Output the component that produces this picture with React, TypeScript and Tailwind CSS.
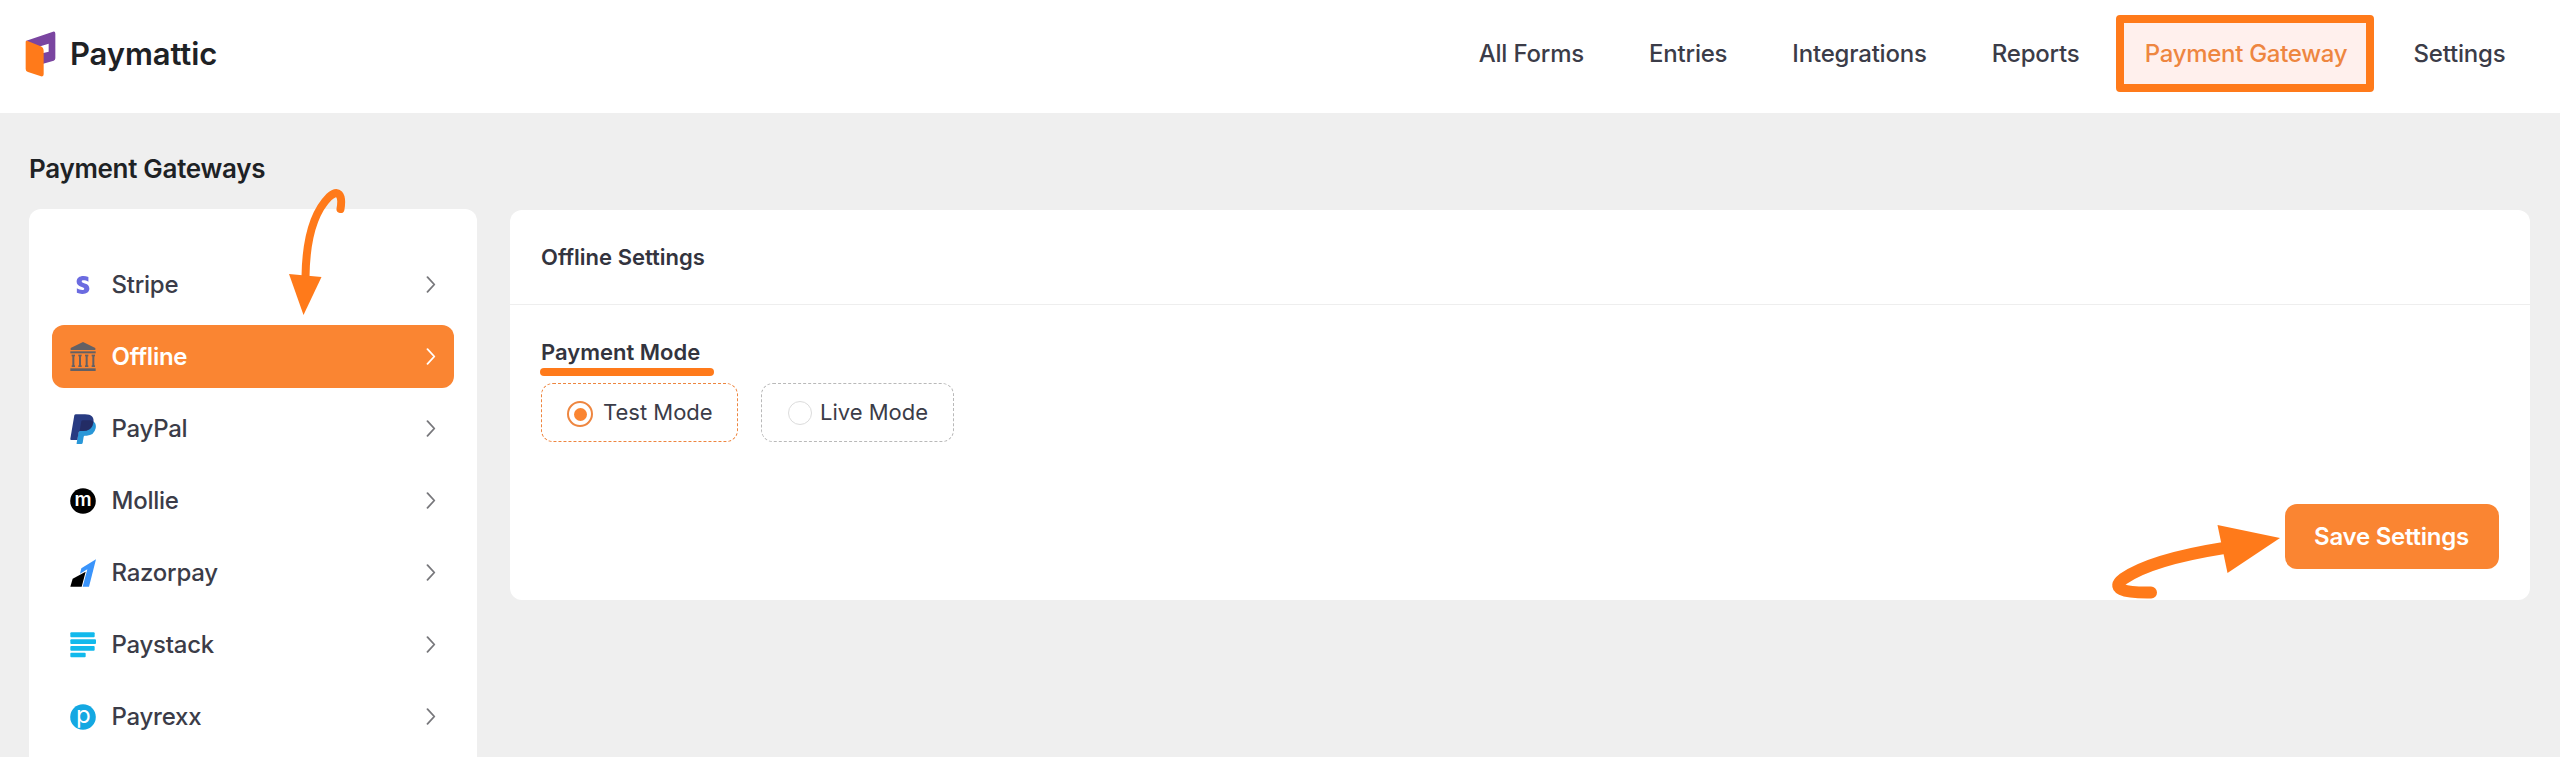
import React from 'react';
import { FaStripeS } from 'react-icons/fa';

const BrandLogo = () => (
  <svg width="31" height="47" viewBox="0 0 93 141">
    <path
      fill="#7a45a0"
      fillRule="evenodd"
      d="M4 29 L84 2 Q91 0 91 8 V82 Q91 87 86 89 L52 99 V67 L71 62 V38 L36 49 Q12 37 4 29 Z"
    />
    <path fill="#ff7a1a" d="M2 33 Q2 28 8 30 L47 46 Q56 50 56 60 V130 Q56 138 48 136 L9 123 Q2 121 2 114 Z" />
  </svg>
);

const StripeIcon = () => <FaStripeS className="h-[18px] w-[14px] text-[#6b6be0]" />;

const BankIcon = () => (
  <svg width="26" height="30" viewBox="0 0 78 90" fill="#636064">
    <path d="M39 0 L76 18 V24 H2 V18 Z" />
    <rect x="1" y="28" width="76" height="6" />
    {[6, 26, 46, 66].map((x) => (
      <g key={x}>
        <rect x={x - 1} y="38" width="10" height="5" />
        <rect x={x + 1} y="41" width="6" height="32" />
        <rect x={x - 1} y="70" width="10" height="5" />
      </g>
    ))}
    <rect x="1" y="79" width="76" height="8" />
  </svg>
);

const PaypalIcon = () => (
  <svg width="26" height="30" viewBox="0 0 78 90">
    <path fill="#2997d8" d="M69 22 Q80 28 77 43 Q72 65 50 65 H44 Q42 65 41 68 L38 87 Q37 90 34 90 H22 Q19 90 20 87 L28 40 Z" />
    <path fill="#283b82" d="M13 4 Q14 1 18 1 H45 Q75 1 70 27 Q65 51 38 51 H31 Q27 51 26 55 L22 78 H4 Q0 78 1 74 Z" />
    <path fill="#232c65" d="M34 22 Q35 19 39 19 H60 Q66 20 70 23 Q67 51 38 51 H29 Z" />
  </svg>
);

const MollieIcon = () => (
  <svg width="26" height="26" viewBox="0 0 26 26" className="overflow-visible">
    <circle cx="13" cy="13" r="12.8" fill="#000" />
    <text x="13" y="18" textAnchor="middle" fontFamily="Inter" fontSize="19" fontWeight="600" fill="#fff">
      m
    </text>
  </svg>
);

const RazorpayIcon = () => (
  <svg width="26" height="28" viewBox="0 0 78 84">
    <path fill="#3a94fb" d="M78 1 L57 83 H38 L52 31 L30 44 L34 28 Z" />
    <path fill="#000" d="M47 38 L35 83 H1 L8 59 Z" />
  </svg>
);

const PaystackIcon = () => (
  <svg width="26" height="26" viewBox="0 0 78 78" fill="#12b9ec">
    <rect x="1" y="1" width="73" height="15" rx="3" />
    <rect x="1" y="22" width="77" height="14" rx="3" />
    <rect x="1" y="42" width="73" height="14" rx="3" />
    <rect x="1" y="62" width="46" height="14" rx="3" />
  </svg>
);

const PayrexxIcon = () => (
  <svg width="26" height="26" viewBox="0 0 26 26" className="overflow-visible">
    <circle cx="13" cy="13" r="12.8" fill="#14a8e2" />
    <text x="13.4" y="19" textAnchor="middle" fontFamily="Inter" fontSize="24" fontWeight="400" fill="#fff">
      p
    </text>
  </svg>
);

const Chevron = () => (
  <svg width="10" height="17" viewBox="0 0 10 17" fill="none" stroke="currentColor" strokeWidth="1.8">
    <path d="M1.5 1.2 L8.3 8.5 L1.5 15.8" strokeLinecap="round" strokeLinejoin="round" />
  </svg>
);

const navItems = ['All Forms', 'Entries', 'Integrations', 'Reports', 'Payment Gateway', 'Settings'];

const gateways = [
  { name: 'Stripe', Icon: StripeIcon },
  { name: 'Offline', Icon: BankIcon },
  { name: 'PayPal', Icon: PaypalIcon },
  { name: 'Mollie', Icon: MollieIcon },
  { name: 'Razorpay', Icon: RazorpayIcon },
  { name: 'Paystack', Icon: PaystackIcon },
  { name: 'Payrexx', Icon: PayrexxIcon },
];

const Header = () => (
  <header className="flex h-[113px] items-center justify-between bg-white pl-[25px] pr-[54.5px]">
    <div className="flex items-center gap-[14px] pb-[5px]">
      <BrandLogo />
      <span className="pb-px text-[31px] font-semibold leading-9 tracking-[-0.1px] text-[#1e2225]">Paymattic</span>
    </div>
    <nav className="flex items-center pb-[6px] text-[24px] font-medium tracking-[-0.2px] text-[#3b3c48]">
      {navItems.map((item) =>
        item === 'Payment Gateway' ? (
          <a
            key={item}
            className="ml-[36px] mr-[40px] flex h-[77px] w-[258px] items-center justify-center rounded-[4px] border-8 border-[#ff7a1a] bg-[#fff0ed] pl-[3px] tracking-[-0.3px] text-[#ee8640]"
          >
            {item}
          </a>
        ) : (
          <a key={item} className={item === 'Reports' || item === 'Settings' ? '' : 'mr-[65px]'}>
            {item}
          </a>
        )
      )}
    </nav>
  </header>
);

const Sidebar = () => (
  <aside className="h-[600px] w-[448px] shrink-0 rounded-[12px] bg-white px-[23px] pt-[44px]">
    <div className="flex flex-col gap-[9px]">
      {gateways.map(({ name, Icon }) => {
        const active = name === 'Offline';
        return (
          <div
            key={name}
            className={`flex h-[63px] items-center rounded-[12px] pl-[18px] pr-[18px] ${
              active ? 'bg-[#fa8532] text-white' : 'text-[#3b3c48]'
            }`}
          >
            <span className="flex w-[26px] justify-center">
              <Icon />
            </span>
            <span
              className={`ml-[15.5px] flex-1 text-[24px] leading-8 tracking-[-0.25px] ${
                active ? 'font-semibold' : 'font-medium'
              }`}
            >
              {name}
            </span>
            <span className={active ? 'text-white' : 'text-[#77777b]'}>
              <Chevron />
            </span>
          </div>
        );
      })}
    </div>
  </aside>
);

const SettingsCard = () => (
  <section className="mt-px flex h-[390px] w-[2020px] flex-col rounded-[12px] bg-white">
    <div className="flex h-[95px] items-center border-b border-[#eeeeee] px-[31px] text-[22px] font-semibold text-[#33343e]">
      Offline Settings
    </div>
    <div className="flex flex-1 flex-col px-[31px] pt-[31px]">
      <h3 className="text-[22px] font-semibold leading-8 text-[#33343e]">Payment Mode</h3>
      <div className="-ml-px h-[8px] w-[174px] rounded-full bg-[#ff7a1a]" />
      <div className="mt-[7px] flex gap-[23px] text-[22px] text-[#3b3c48]">
        <label className="flex h-[59px] w-[197px] items-center rounded-[12px] border border-dashed border-[#ee8640] pl-[25px]">
          <span className="mt-[3px] flex h-[26px] w-[26px] items-center justify-center rounded-full border-2 border-[#ee8640]">
            <span className="h-[13px] w-[13px] rounded-full bg-[#fa8532]" />
          </span>
          <span className="ml-[10px]">Test Mode</span>
        </label>
        <label className="flex h-[59px] w-[193px] items-center rounded-[12px] border border-dashed border-[#b9b9b9] pl-[26px]">
          <span className="h-[24px] w-[24px] rounded-full border border-[#dcdcdc]" />
          <span className="ml-[8px]">Live Mode</span>
        </label>
      </div>
      <button className="mt-[62px] h-[65px] w-[214px] self-end rounded-[12px] bg-[#fa8532] pr-px text-[24px] font-semibold tracking-[-0.25px] text-white">
        Save Settings
      </button>
    </div>
  </section>
);

// Hand-drawn pointers laid over the page
const Pointers = () => (
  <svg className="pointer-events-none absolute left-0 top-0" width="2560" height="757" viewBox="0 0 2560 757">
    <g fill="none" stroke="#ff7a1a" strokeLinecap="round" strokeLinejoin="round">
      <path strokeWidth="8" d="M340.5 209 C343 194 338 189 329 197 C313 213 306 240 305.5 277" />
      <path strokeWidth="12" d="M2151 592.5 C2122 593 2111 588 2123 579 C2143 565 2180 555 2224 548" />
    </g>
    <path fill="#ff7a1a" d="M289 274 L321.5 277 L303.5 315 Z" />
    <path fill="#ff7a1a" d="M2217.5 525 L2280 538 L2227.5 573 Z" />
  </svg>
);

export default function App() {
  return (
    <div className="relative h-[757px] w-[2560px] overflow-hidden bg-[#efefef] font-['Inter',sans-serif]">
      <Header />
      <main className="pl-[29px] pr-[30px] pt-[40px]">
        <h1 className="h-[56px] text-[26px] font-semibold leading-8 tracking-[-0.3px] text-[#1e2225]">
          Payment Gateways
        </h1>
        <div className="flex items-start gap-[33px]">
          <Sidebar />
          <SettingsCard />
        </div>
      </main>
      <Pointers />
    </div>
  );
}
